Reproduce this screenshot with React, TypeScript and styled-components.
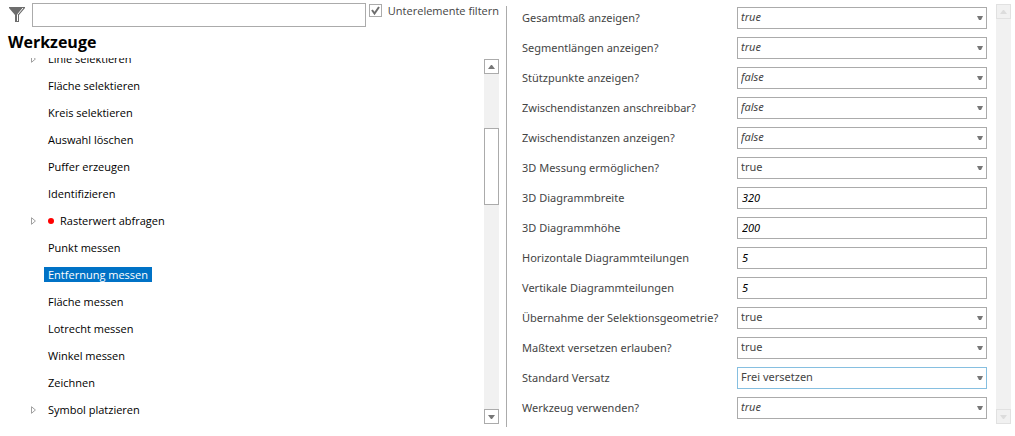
import React, { useState } from 'react';
import styled, { createGlobalStyle } from 'styled-components';

const GlobalStyle = createGlobalStyle`
  *, *::before, *::after { box-sizing: border-box; }
  body {
    margin: 0;
    background: #fff;
    color: #444;
    font-family: 'Open Sans', 'Noto Sans', sans-serif;
    font-size: 11px;
    line-height: 16px;
  }
`;

const Page = styled.main`
  display: grid;
  grid-template-columns: minmax(0, 1fr) 1px minmax(0, 1fr);
  padding-right: 2px;
`;

const ToolPanel = styled.section`
  display: flex;
  flex-direction: column;
  padding: 3px 7px 3px 8px;
`;

const Divider = styled.div`
  margin-top: 6px;
  background: #ababab;
`;

const FilterBar = styled.div`
  display: flex;
  align-items: flex-start;
  height: 24px;
`;

const FilterIcon = styled.svg`
  flex: none;
  width: 16px;
  height: 16px;
  margin: 4px 7px 0 1px;
`;

const FilterInput = styled.input`
  flex: 1;
  min-width: 0;
  height: 24px;
  margin-right: 3px;
  padding: 0 4px;
  border: 1px solid #ababab;
  border-radius: 0;
  font: inherit;
  outline: none;
`;

const CheckLabel = styled.label`
  display: flex;
  gap: 6px;
  white-space: nowrap;
`;

const CheckBox = styled.span`
  display: grid;
  width: 13px;
  height: 13px;
  margin-top: 1px;

  > * { grid-area: 1 / 1; }
  > svg { pointer-events: none; }
  > input:not(:checked) + svg { display: none; }
`;

const CheckInput = styled.input`
  appearance: none;
  width: 13px;
  height: 13px;
  margin: 0;
  border: 1px solid #ababab;
  background: #fff;
`;

const Title = styled.h1`
  margin: 3px 0 4px;
  color: #000;
  font-size: 16px;
  line-height: 24px;
  font-weight: 700;
`;

const TreeArea = styled.div`
  display: flex;
  flex: 1;
`;

const TreeViewport = styled.div`
  flex: 1;
  overflow: hidden;
`;

const Tree = styled.ul`
  margin: -13px 0 0;
  padding: 0 0 0 20px;
  list-style: none;
`;

const TreeItem = styled.li`
  display: flex;
  align-items: center;
  height: 27px;
  color: #000;
`;

const Expander = styled.span`
  display: flex;
  width: 16px;
  padding-left: 3px;
`;

const TreeButton = styled.button<{ $selected: boolean }>`
  display: flex;
  align-items: center;
  gap: 6px;
  height: 15px;
  padding: 0 4px;
  border: 0;
  background: ${(p) => (p.$selected ? '#0072c6' : 'transparent')};
  color: ${(p) => (p.$selected ? '#fff' : '#000')};
  font: inherit;
  line-height: 15px;
  white-space: nowrap;
`;

const Dot = styled.span`
  width: 6px;
  height: 6px;
  border-radius: 50%;
  background: #f00;
`;

const Track = styled.div<{ $top: number }>`
  display: flex;
  flex: none;
  flex-direction: column;
  width: 15px;
  margin-top: ${(p) => p.$top}px;
  background: #f1f1f1;
`;

const ScrollButton = styled.button<{ $disabled?: boolean }>`
  display: flex;
  align-items: center;
  justify-content: center;
  height: 15px;
  padding: 0;
  border: 1px solid ${(p) => (p.$disabled ? '#e1e1e1' : '#ababab')};
  background: ${(p) => (p.$disabled ? '#f1f1f1' : '#fff')};
  color: ${(p) => (p.$disabled ? '#dcdcdc' : '#777')};
`;

const ThumbArea = styled.div`
  flex: 1;
  padding-top: 54px;
`;

const Thumb = styled.div`
  height: 77px;
  border: 1px solid #ababab;
  background: #fff;
`;

const PropertyPanel = styled.section`
  display: flex;
  gap: 9px;
  padding: 4px 2px 3px 15px;
  font-family: 'Noto Sans', 'Open Sans', sans-serif;
`;

const Form = styled.form`
  display: flex;
  flex: 1;
  flex-direction: column;
  gap: 8px;
  padding: 3px 0 5px;
`;

const Row = styled.div`
  display: grid;
  grid-template-columns: 215px minmax(0, 1fr);
  align-items: center;
  height: 22px;
`;

const Label = styled.label`
  white-space: nowrap;
`;

const SelectBox = styled.span`
  display: grid;
  align-items: center;

  > * { grid-area: 1 / 1; }
  > svg { justify-self: end; margin: 0 4px 0 0; pointer-events: none; }
`;

const Select = styled.select<{ $inherited: boolean; $active: boolean }>`
  appearance: none;
  width: 100%;
  height: 22px;
  padding: 0 16px 2px 3px;
  border: 1px solid ${(p) => (p.$active ? '#86bfe0' : '#ababab')};
  border-radius: 0;
  background: #fff;
  color: #444;
  font: inherit;
  font-style: ${(p) => (p.$inherited ? 'italic' : 'normal')};
  outline: none;
`;

const TextInput = styled.input`
  width: 100%;
  height: 22px;
  padding: 0 4px 2px;
  border: 1px solid #ababab;
  border-radius: 0;
  color: #000;
  font: inherit;
  font-style: italic;
  outline: none;
`;

const DownArrow = () => (
  <svg width="6" height="4" viewBox="0 0 6 4" aria-hidden="true">
    <path d="M0 0h6L4 4H2z" fill="#777" />
  </svg>
);

const ScrollArrow = ({ up }: { up?: boolean }) => (
  <svg width="7" height="4" viewBox="0 0 7 4" aria-hidden="true">
    <path d={up ? 'M0 4L3 0h1l3 4z' : 'M0 0h7L4 4H3z'} fill="currentColor" />
  </svg>
);

interface Tool {
  name: string;
  expandable?: boolean;
  changed?: boolean;
}

const tools: Tool[] = [
  { name: 'Linie selektieren', expandable: true },
  { name: 'Fläche selektieren' },
  { name: 'Kreis selektieren' },
  { name: 'Auswahl löschen' },
  { name: 'Puffer erzeugen' },
  { name: 'Identifizieren' },
  { name: 'Rasterwert abfragen', expandable: true, changed: true },
  { name: 'Punkt messen' },
  { name: 'Entfernung messen' },
  { name: 'Fläche messen' },
  { name: 'Lotrecht messen' },
  { name: 'Winkel messen' },
  { name: 'Zeichnen' },
  { name: 'Symbol platzieren', expandable: true },
];

interface Property {
  label: string;
  value: string;
  kind: 'select' | 'text';
  inherited?: boolean;
  active?: boolean;
}

const properties: Property[] = [
  { label: 'Gesamtmaß anzeigen?', value: 'true', kind: 'select', inherited: true },
  { label: 'Segmentlängen anzeigen?', value: 'true', kind: 'select', inherited: true },
  { label: 'Stützpunkte anzeigen?', value: 'false', kind: 'select', inherited: true },
  { label: 'Zwischendistanzen anschreibbar?', value: 'false', kind: 'select', inherited: true },
  { label: 'Zwischendistanzen anzeigen?', value: 'false', kind: 'select', inherited: true },
  { label: '3D Messung ermöglichen?', value: 'true', kind: 'select' },
  { label: '3D Diagrammbreite', value: '320', kind: 'text' },
  { label: '3D Diagrammhöhe', value: '200', kind: 'text' },
  { label: 'Horizontale Diagrammteilungen', value: '5', kind: 'text' },
  { label: 'Vertikale Diagrammteilungen', value: '5', kind: 'text' },
  { label: 'Übernahme der Selektionsgeometrie?', value: 'true', kind: 'select' },
  { label: 'Maßtext versetzen erlauben?', value: 'true', kind: 'select' },
  { label: 'Standard Versatz', value: 'Frei versetzen', kind: 'select', active: true },
  { label: 'Werkzeug verwenden?', value: 'true', kind: 'select', inherited: true },
];

const PropertyRow = ({ property, id }: { property: Property; id: string }) => {
  const options = property.active ? [property.value] : ['true', 'false'];
  return (
    <Row>
      <Label htmlFor={id}>{property.label}</Label>
      {property.kind === 'text' ? (
        <TextInput id={id} defaultValue={property.value} />
      ) : (
        <SelectBox>
          <Select
            id={id}
            defaultValue={property.value}
            $inherited={!!property.inherited}
            $active={!!property.active}
          >
            {options.map((o) => (
              <option key={o}>{o}</option>
            ))}
          </Select>
          <DownArrow />
        </SelectBox>
      )}
    </Row>
  );
};

export default function App() {
  const [selected, setSelected] = useState('Entfernung messen');
  return (
    <>
      <GlobalStyle />
      <Page>
        <ToolPanel>
          <FilterBar>
            <FilterIcon viewBox="0 0 16 16" aria-hidden="true">
              <path d="M0 0h16v1l-6 7v7H6V8L0 1z" fill="#6d6d6d" />
              <path d="M14 1L8.500 7.500V14" fill="none" stroke="#fff" />
            </FilterIcon>
            <FilterInput aria-label="Filter" />
            <CheckLabel>
              <CheckBox>
                <CheckInput type="checkbox" defaultChecked />
                <svg width="13" height="13" viewBox="0 0 13 13" aria-hidden="true">
                  <path d="M3 6l2.500 3.500L10 3" fill="none" stroke="#6d6d6d" strokeWidth="2" />
                </svg>
              </CheckBox>
              Unterelemente filtern
            </CheckLabel>
          </FilterBar>
          <Title>Werkzeuge</Title>
          <TreeArea>
            <TreeViewport>
              <Tree>
                {tools.map((tool) => (
                  <TreeItem key={tool.name}>
                    <Expander>
                      {tool.expandable && (
                        <svg width="5" height="8" viewBox="0 0 5 8" aria-hidden="true">
                          <path d="M.5.7v6.600L4.400 4z" fill="#fff" stroke="#a0a0a0" />
                        </svg>
                      )}
                    </Expander>
                    <TreeButton
                      type="button"
                      $selected={tool.name === selected}
                      onClick={() => setSelected(tool.name)}
                    >
                      {tool.changed && <Dot />}
                      {tool.name}
                    </TreeButton>
                  </TreeItem>
                ))}
              </Tree>
            </TreeViewport>
            <Track $top={1}>
              <ScrollButton type="button" aria-label="Nach oben">
                <ScrollArrow up />
              </ScrollButton>
              <ThumbArea>
                <Thumb />
              </ThumbArea>
              <ScrollButton type="button" aria-label="Nach unten">
                <ScrollArrow />
              </ScrollButton>
            </Track>
          </TreeArea>
        </ToolPanel>
        <Divider />
        <PropertyPanel>
          <Form>
            {properties.map((property, i) => (
              <PropertyRow key={property.label} property={property} id={`property-${i}`} />
            ))}
          </Form>
          <Track $top={0}>
            <ScrollButton type="button" aria-label="Nach oben" $disabled>
              <ScrollArrow up />
            </ScrollButton>
            <ThumbArea />
            <ScrollButton type="button" aria-label="Nach unten" $disabled>
              <ScrollArrow />
            </ScrollButton>
          </Track>
        </PropertyPanel>
      </Page>
    </>
  );
}
